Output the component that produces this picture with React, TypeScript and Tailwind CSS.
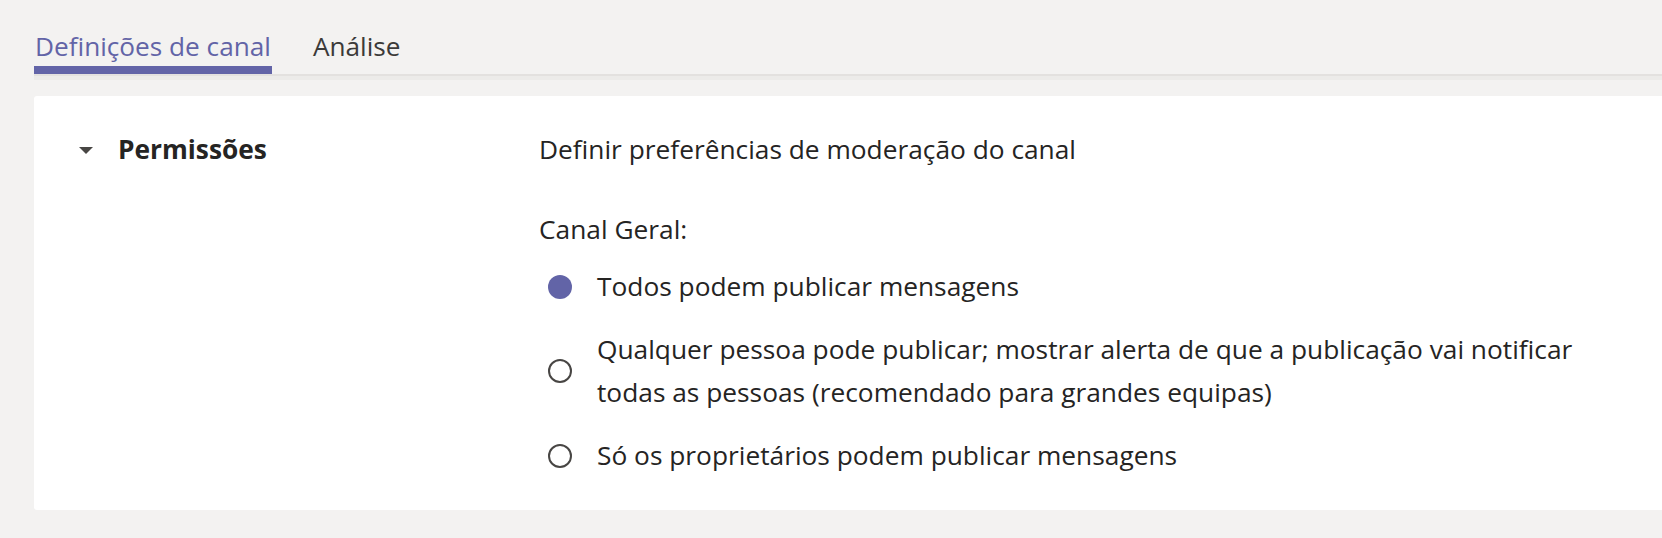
import React, { useState } from "react";

const options = [
  "Todos podem publicar mensagens",
  "Qualquer pessoa pode publicar; mostrar alerta de que a publicação vai notificar todas as pessoas (recomendado para grandes equipas)",
  "Só os proprietários podem publicar mensagens",
];

const Radio = ({ checked }: { checked: boolean }) =>
  checked ? (
    <span className="block w-[24px] h-[24px] shrink-0 rounded-full bg-[#6264a7]" />
  ) : (
    <span className="block w-[24px] h-[24px] shrink-0 rounded-full border-2 border-[#484644]" />
  );

export default function App() {
  const [selected, setSelected] = useState(0);
  const [tab, setTab] = useState(0);

  return (
    <div
      className="w-full h-screen bg-[#f3f2f1] text-[#252423] overflow-hidden"
      style={{ fontFamily: '"Open Sans", "Noto Sans", sans-serif' }}
    >
      {/* tabs */}
      <div className="ml-[34px] pt-[28px]">
        <div className="flex gap-[40px] text-[26.2px] leading-[36px]">
          {["Definições de canal", "Análise"].map((t, i) => (
            <button
              key={t}
              onClick={() => setTab(i)}
              className={`flex flex-col ${tab === i ? "text-[#6264a7]" : "text-[#3b3a39]"}`}
            >
              <span className="px-[1px]">{t}</span>
              <span
                className={`mt-[2px] h-[8px] w-full ${tab === i ? "bg-[#6264a7]" : "bg-transparent"}`}
              />
            </button>
          ))}
        </div>
        <div className="h-[6px] bg-[#ecebe9] border-t-2 border-[#e3e1df]" />
      </div>

      {/* card */}
      <div className="ml-[34px] mt-[16px] h-[414px] bg-white rounded-tl-[3px] rounded-bl-[3px] pt-[32px] flex">
        <div className="w-[505px] shrink-0 flex items-start pl-[45px]">
          <svg width="14" height="7" viewBox="0 0 14 7" className="mt-[19px] shrink-0">
            <path d="M0 0 L14 0 L7 7 Z" fill="#484644" />
          </svg>
          <span className="ml-[25px] text-[26.3px] leading-[43px] font-bold text-[#252423]">Permissões</span>
        </div>

        <div className="flex flex-col text-[26.3px] leading-[43px]">
          <div>Definir preferências de moderação do canal</div>
          <div className="mt-[37px]">Canal Geral:</div>
          <div className="mt-[14px] flex flex-col gap-[20px] pl-[9px]">
            {options.map((o, i) => (
              <label
                key={i}
                onClick={() => setSelected(i)}
                className="flex items-center gap-[25px] cursor-pointer"
              >
                <Radio checked={selected === i} />
                <span className="max-w-[1000px]">{o}</span>
              </label>
            ))}
          </div>
        </div>
      </div>
    </div>
  );
}
